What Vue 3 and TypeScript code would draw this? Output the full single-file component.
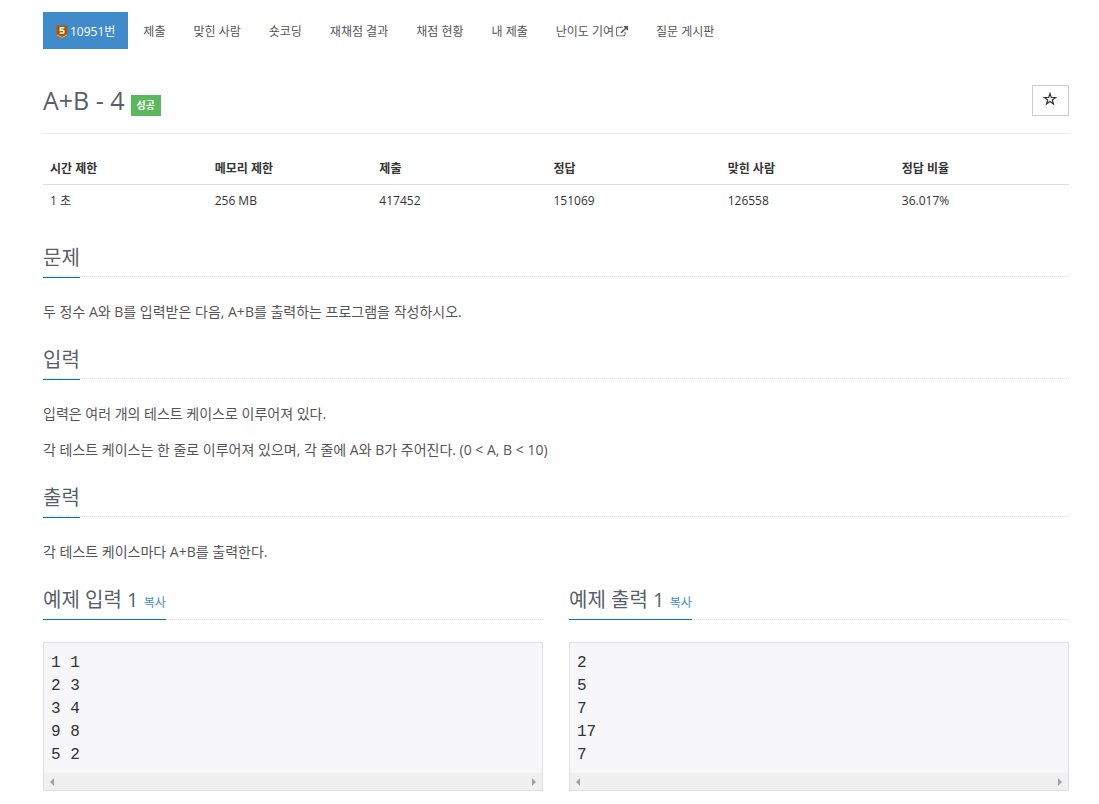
<script setup lang="ts">
interface Tab {
  label: string
  external?: boolean
}
interface Section {
  title: string
  paragraphs: string[]
}
interface Sample {
  title: string
  lines: string[]
}

const tabs: Tab[] = [
  { label: '제출' },
  { label: '맞힌 사람' },
  { label: '숏코딩' },
  { label: '재채점 결과' },
  { label: '채점 현황' },
  { label: '내 제출' },
  { label: '난이도 기여', external: true },
  { label: '질문 게시판' },
]

const stats = [
  { name: '시간 제한', value: '1 초' },
  { name: '메모리 제한', value: '256 MB' },
  { name: '제출', value: '417452' },
  { name: '정답', value: '151069' },
  { name: '맞힌 사람', value: '126558' },
  { name: '정답 비율', value: '36.017%' },
]

const sections: Section[] = [
  { title: '문제', paragraphs: ['두 정수 A와 B를 입력받은 다음, A+B를 출력하는 프로그램을 작성하시오.'] },
  {
    title: '입력',
    paragraphs: [
      '입력은 여러 개의 테스트 케이스로 이루어져 있다.',
      '각 테스트 케이스는 한 줄로 이루어져 있으며, 각 줄에 A와 B가 주어진다. (0 < A, B < 10)',
    ],
  },
  { title: '출력', paragraphs: ['각 테스트 케이스마다 A+B를 출력한다.'] },
]

const samples: Sample[] = [
  { title: '예제 입력 1', lines: ['1 1', '2 3', '3 4', '9 8', '5 2'] },
  { title: '예제 출력 1', lines: ['2', '5', '7', '17', '7'] },
]
</script>

<template>
  <main class="page">
    <nav class="tabs">
      <a class="tab active" href="#">
        <svg class="tier" viewBox="0 0 12 14" aria-hidden="true">
          <path d="M0.5 0.5h11v10L6 13.5 0.5 10.500z" fill="#ad5600" />
          <path d="M0.800 9.800L6 12.500l5.200-2.700" fill="none" stroke="#f0c9a0" stroke-width="0.900" />
          <path d="M8.300 2.800H4.500L4.300 5.400c1.400-.5 3.700-.4 3.700 1.300S5.500 8.600 3.700 7.900" fill="none" stroke="#fff" stroke-width="1.500" />
        </svg>
        <span>10951번</span>
      </a>
      <a v-for="tab in tabs" :key="tab.label" class="tab" href="#">
        <span>{{ tab.label }}</span>
        <svg v-if="tab.external" class="external" viewBox="0 0 1792 1792" aria-hidden="true">
          <path
            fill="currentColor"
            d="M1408 928v320q0 119-84.500 203.500T1120 1536H288q-119 0-203.500-84.500T0 1248V416q0-119 84.500-203.500T288 128h704q14 0 23 9t9 23v64q0 14-9 23t-23 9H288q-66 0-113 47t-47 113v832q0 66 47 113t113 47h832q66 0 113-47t47-113V928q0-14 9-23t23-9h64q14 0 23 9t9 23zm384-864v512q0 26-19 45t-45 19-45-19l-176-176-652 652q-10 10-23 10t-23-10L695 983q-10-10-10-23t10-23l652-652-176-176q-19-19-19-45t19-45 45-19h512q26 0 45 19t19 45z"
          />
        </svg>
      </a>
    </nav>

    <header class="title-bar">
      <h1>A+B - 4</h1>
      <span class="badge">성공</span>
      <button class="favorite" type="button" aria-label="즐겨찾기">
        <svg viewBox="0 0 14 14" aria-hidden="true">
          <path d="M7 1.600L8.300 5.500H12.600L9.200 7.900 10.500 12 7 9.500 3.500 12 4.800 7.900 1.400 5.500H5.700z" fill="none" stroke="#333" stroke-width="1.200" />
        </svg>
      </button>
    </header>

    <table class="stats">
      <thead>
        <tr>
          <th v-for="stat in stats" :key="stat.name" scope="col">{{ stat.name }}</th>
        </tr>
      </thead>
      <tbody>
        <tr>
          <td v-for="stat in stats" :key="stat.name">{{ stat.value }}</td>
        </tr>
      </tbody>
    </table>

    <section v-for="section in sections" :key="section.title" class="section">
      <div class="headline">
        <h2>{{ section.title }}</h2>
      </div>
      <p v-for="text in section.paragraphs" :key="text">{{ text }}</p>
    </section>

    <div class="samples">
      <section v-for="sample in samples" :key="sample.title" class="sample">
        <div class="headline">
          <h2>{{ sample.title }} <a class="copy" href="#">복사</a></h2>
        </div>
        <div class="code">
          <pre>{{ sample.lines.join('\n') }}</pre>
          <div class="scrollbar" aria-hidden="true">
            <svg viewBox="0 0 4 8"><path d="M4 0v8L0 4z" fill="#a3a3a3" /></svg>
            <svg viewBox="0 0 4 8"><path d="M0 0v8l4-4z" fill="#a3a3a3" /></svg>
          </div>
        </div>
      </section>
    </div>
  </main>
</template>

<style>
body {
  margin: 0;
  background: #fff;
}
</style>

<style scoped>
.page {
  padding: 12px 30px 13px 43px;
  font-family: 'Open Sans', 'Noto Sans CJK KR', sans-serif;
  font-size: 14px;
  line-height: 26px;
  color: #555;
}
a {
  text-decoration: none;
}
.tabs {
  display: flex;
  gap: 2px;
}
.tab {
  display: flex;
  align-items: center;
  gap: 2px;
  padding: 11px 13px 9px;
  font-size: 12px;
  line-height: 17px;
  color: #555;
  white-space: nowrap;
}
.tab.active {
  background: #428bca;
  color: #fff;
}
.tier {
  width: 12px;
  height: 14px;
}
.external {
  width: 12px;
  height: 12px;
}
.title-bar {
  display: flex;
  align-items: flex-end;
  gap: 6px;
  margin-top: 36px;
  padding-bottom: 17px;
  border-bottom: 1px solid #eee;
}
h1 {
  margin: 0;
  font-size: 25px;
  font-weight: 400;
  line-height: 31px;
  color: #585f69;
}
.badge {
  padding: 0 6px;
  background: #5cb85c;
  color: #fff;
  font-size: 10px;
  font-weight: 700;
  line-height: 21px;
}
.favorite {
  display: flex;
  align-items: center;
  justify-content: center;
  width: 37px;
  height: 31px;
  margin-left: auto;
  padding: 0 2px 4px 0;
  border: 1px solid #ccc;
  background: #fff;
}
.favorite svg {
  width: 14px;
  height: 14px;
}
.stats {
  width: 100%;
  margin: 18px 0 24px;
  border-collapse: collapse;
  table-layout: fixed;
  font-size: 12px;
  line-height: 17px;
  color: #333;
}
.stats th,
.stats td {
  width: 17%;
  padding: 8px 7px 7px;
  text-align: left;
}
.stats td {
  padding: 7px 7px 8px;
}
.stats th:nth-child(-n + 2) {
  width: 16%;
}
.stats th {
  font-weight: 700;
  border-bottom: 1px solid #ddd;
}
.section {
  margin-top: 18px;
}
.samples {
  display: flex;
  gap: 26px;
  margin-top: 19px;
}
.headline {
  display: flex;
  margin-bottom: 22px;
  border-bottom: 1px dotted #dfe3ea;
}
h2 {
  margin: 0 0 -2px;
  padding-bottom: 3px;
  border-bottom: 1px solid #0076bd;
  font-size: 20px;
  font-weight: 400;
  line-height: 33px;
  color: #585f69;
}
p {
  margin: 0 0 10px;
}
.copy {
  font-size: 12px;
  line-height: 17px;
  color: #428bca;
}
.sample {
  flex: 1;
}
.sample h2 {
  margin-bottom: -1px;
  line-height: 32px;
}
.code {
  border: 1px solid #e0e1e5;
  background: #f7f7f9;
}
pre {
  margin: 0;
  padding: 9px 7px 6px;
  font-family: 'Liberation Mono', monospace;
  font-size: 16px;
  line-height: 23px;
  color: #333;
}
.scrollbar {
  display: flex;
  align-items: center;
  justify-content: space-between;
  height: 17px;
  padding: 0 6px;
  background: #f0f0f0;
}
.scrollbar svg {
  width: 4px;
  height: 8px;
}
</style>
